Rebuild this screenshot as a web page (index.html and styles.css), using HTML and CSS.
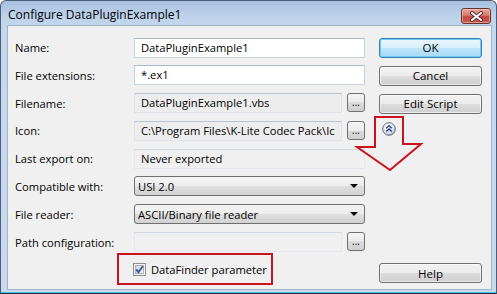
FILE: index.html
```html
<!DOCTYPE html>
<html lang="en">
<head>
  <meta charset="UTF-8" />
  <title>Configure DataPluginExample1</title>
  <link rel="stylesheet" href="styles.css">
</head>
<body>
  <div class="window">
    <div class="titlebar">
      <span class="title">Configure DataPluginExample1</span>
      <button class="close-btn" title="Close">
        <svg width="15" height="11" viewBox="0 0 15 11">
          <path d="M3 2 L12 9 M12 2 L3 9" stroke="#5a2a2a" stroke-width="4" stroke-linecap="round" />
          <path d="M3 2 L12 9 M12 2 L3 9" stroke="#ffffff" stroke-width="2.2" stroke-linecap="round" />
        </svg>
      </button>
    </div>

    <div class="client">
      <div class="form-area">
        <div class="form-grid">
          <label class="field-label">Name:</label>
          <div class="field"><div class="textbox">DataPluginExample1</div></div>

          <label class="field-label">File extensions:</label>
          <div class="field"><div class="textbox">*.ex1</div></div>

          <label class="field-label">Filename:</label>
          <div class="field">
            <div class="textbox readonly">DataPluginExample1.vbs</div>
            <button class="dots-btn">...</button>
          </div>

          <label class="field-label">Icon:</label>
          <div class="field">
            <div class="textbox readonly"><span class="clip">C:\Program Files\K-Lite Codec Pack\Icon</span></div>
            <button class="dots-btn">...</button>
          </div>

          <label class="field-label">Last export on:</label>
          <div class="field"><div class="textbox readonly plain">Never exported</div></div>

          <label class="field-label">Compatible with:</label>
          <div class="field">
            <div class="combo"><span>USI 2.0</span><span class="combo-arrow"></span></div>
          </div>

          <label class="field-label">File reader:</label>
          <div class="field">
            <div class="combo"><span>ASCII/Binary file reader</span><span class="combo-arrow"></span></div>
          </div>

          <label class="field-label">Path configuration:</label>
          <div class="field">
            <div class="textbox readonly plain"></div>
            <button class="dots-btn">...</button>
          </div>
        </div>

        <div class="highlight-box">
          <label class="check">
            <svg class="check-box" width="13" height="13" viewBox="0 0 13 13">
              <defs>
                <linearGradient id="cbg" x1="0" y1="0" x2="1" y2="1">
                  <stop offset="0" stop-color="#d4d4d4" />
                  <stop offset="1" stop-color="#f7f7f7" />
                </linearGradient>
              </defs>
              <rect x="0.5" y="0.5" width="12" height="12" fill="#f4f4f4" stroke="#8e8f8f" />
              <rect x="2.5" y="2.5" width="8" height="8" fill="url(#cbg)" stroke="#b1b1b1" />
              <path d="M3.2 6.4 L5.4 9.2 L9.8 3.2" fill="none" stroke="#2d52a0" stroke-width="1.8" />
            </svg>
            DataFinder parameter
          </label>
        </div>
      </div>

      <div class="side">
        <button class="btn btn-default">OK</button>
        <button class="btn">Cancel</button>
        <button class="btn">Edit Script</button>
        <span class="collapse-icon">
          <svg width="14" height="14" viewBox="0 0 14 14">
            <defs>
              <radialGradient id="cg" cx="0.4" cy="0.3" r="0.8">
                <stop offset="0" stop-color="#ffffff" />
                <stop offset="0.6" stop-color="#dfe3ea" />
                <stop offset="1" stop-color="#9aa4b4" />
              </radialGradient>
            </defs>
            <circle cx="7" cy="7" r="6.3" fill="url(#cg)" stroke="#5d6b80" stroke-width="1" />
            <path d="M4.3 6.2 L7 3.6 L9.7 6.2 M4.3 9.6 L7 7 L9.7 9.6" fill="none" stroke="#1f3c86" stroke-width="1.4" />
          </svg>
        </span>
        <button class="btn help-btn">Help</button>
      </div>

      <svg class="arrow-mark" width="497" height="294" viewBox="0 0 497 294">
        <path d="M374 116 L402 116 L402 143 L420 143 L389 169 L356 146 L374 146 Z" fill="none" stroke="#c8141e" stroke-width="2" stroke-linejoin="miter" />
      </svg>
    </div>
  </div>
</body>
</html>
```

FILE: styles.css
```css
body {
  margin: 0;
  padding: 0;
  background: #ffffff;
  font-family: "Segoe UI", "Open Sans", sans-serif;
  font-size: 11.2px;
  color: #000;
}

.window {
  width: 497px;
  height: 294px;
  box-sizing: border-box;
  border: 1px solid #4a5e78;
  border-bottom-color: #1f2a38;
  border-radius: 6px 6px 0 0;
  background: linear-gradient(to bottom, #a7c0de, #bcd1ea 14px, #c6d8ee 30px, #c9daef);
  padding: 0 4px 3px 6px;
  display: flex;
  flex-direction: column;
  box-shadow: inset 0 -1px 0 #4fc3e6;
}

.titlebar {
  height: 24px;
  display: flex;
  align-items: center;
  justify-content: space-between;
  padding-left: 1px;
}

.title {
  font-size: 12px;
  color: #000;
  margin-top: 2px;
}

.close-btn {
  width: 30px;
  height: 16px;
  margin-top: 6px;
  margin-right: 1px;
  padding: 0;
  border: 1px solid #6e2f2a;
  border-radius: 3px;
  background: linear-gradient(to bottom, #e9a99c, #d6786b 45%, #c2493e 55%, #c9584b);
  box-shadow: inset 0 0 0 1px rgba(255, 220, 210, 0.5);
  display: flex;
  align-items: center;
  justify-content: center;
}

.client {
  position: relative;
  flex: 1;
  background: #f0f0f0;
  border: 1px solid #9fb3cc;
  display: flex;
  padding: 11.5px 0 0 7px;
}

.form-area {
  width: 350px;
}

.form-grid {
  display: grid;
  grid-template-columns: 119px 231px;
  grid-auto-rows: 20px;
  row-gap: 7.8px;
}

.field-label {
  display: flex;
  align-items: center;
  white-space: nowrap;
}

.field {
  display: flex;
  align-items: stretch;
  gap: 5px;
}

.textbox {
  flex: 1;
  min-width: 0;
  box-sizing: border-box;
  height: 20px;
  line-height: 18px;
  padding: 0 6px;
  background: #ffffff;
  border: 1px solid #c5d2e0;
  border-top-color: #abb8c8;
  white-space: nowrap;
  overflow: hidden;
}

.clip {
  display: block;
  overflow: hidden;
  white-space: nowrap;
}

.readonly {
  background: #ededed;
  border-color: #dde3e9;
  border-top-color: #b9c3cf;
}

.plain {
  background: #f0f0f0;
  border-color: #e3e8ee;
  border-top-color: #d3d9e1;
}

.dots-btn {
  width: 18px;
  height: 19px;
  padding: 0 0 4px;
  box-sizing: border-box;
  border: 1px solid #707070;
  border-radius: 3px;
  background: linear-gradient(to bottom, #f6f6f6, #ebebeb 50%, #dddddd 50%, #cfcfcf);
  font-family: inherit;
  font-size: 10px;
  line-height: 1;
  display: flex;
  align-items: flex-end;
  justify-content: center;
}

.combo {
  flex: 1;
  box-sizing: border-box;
  height: 20px;
  border: 1px solid #707070;
  border-radius: 3px;
  background: linear-gradient(to bottom, #f4f4f4, #ececec 50%, #dfdfdf 50%, #d2d2d2);
  display: flex;
  align-items: center;
  justify-content: space-between;
  padding: 0 6px 0 3px;
}

.combo-arrow {
  width: 0;
  height: 0;
  border-left: 4px solid transparent;
  border-right: 4px solid transparent;
  border-top: 4px solid #000;
}

.highlight-box {
  width: 156px;
  height: 32px;
  box-sizing: border-box;
  margin: 1px 0 0 102px;
  border: 2px solid #c8141e;
  display: flex;
  align-items: center;
  padding-left: 14px;
}

.check {
  display: flex;
  align-items: center;
  gap: 5px;
  white-space: nowrap;
}

.check-box {
  display: block;
}

.side {
  width: 103px;
  margin-left: 14px;
  display: flex;
  flex-direction: column;
  gap: 8px;
}

.btn {
  height: 20px;
  box-sizing: border-box;
  padding: 0;
  border: 1px solid #707070;
  border-radius: 3px;
  background: linear-gradient(to bottom, #f2f2f2, #ebebeb 50%, #dddddd 50%, #cfcfcf);
  font-family: inherit;
  font-size: 11.5px;
  color: #000;
  box-shadow: inset 0 0 0 1px rgba(255, 255, 255, 0.6);
}

.btn-default {
  border-color: #3c7fb1;
  background: linear-gradient(to bottom, #eaf6fd, #d9f0fc 50%, #bee6fd 50%, #a7d9f5);
  box-shadow: inset 0 0 0 1px #6ccdf7;
}

.collapse-icon {
  display: block;
  width: 14px;
  height: 14px;
  margin: 0 0 0 3px;
}

.collapse-icon svg {
  display: block;
}

.help-btn {
  margin-top: auto;
  margin-bottom: 6px;
}

.arrow-mark {
  position: absolute;
  left: -7px;
  top: -25px;
  pointer-events: none;
}
```
